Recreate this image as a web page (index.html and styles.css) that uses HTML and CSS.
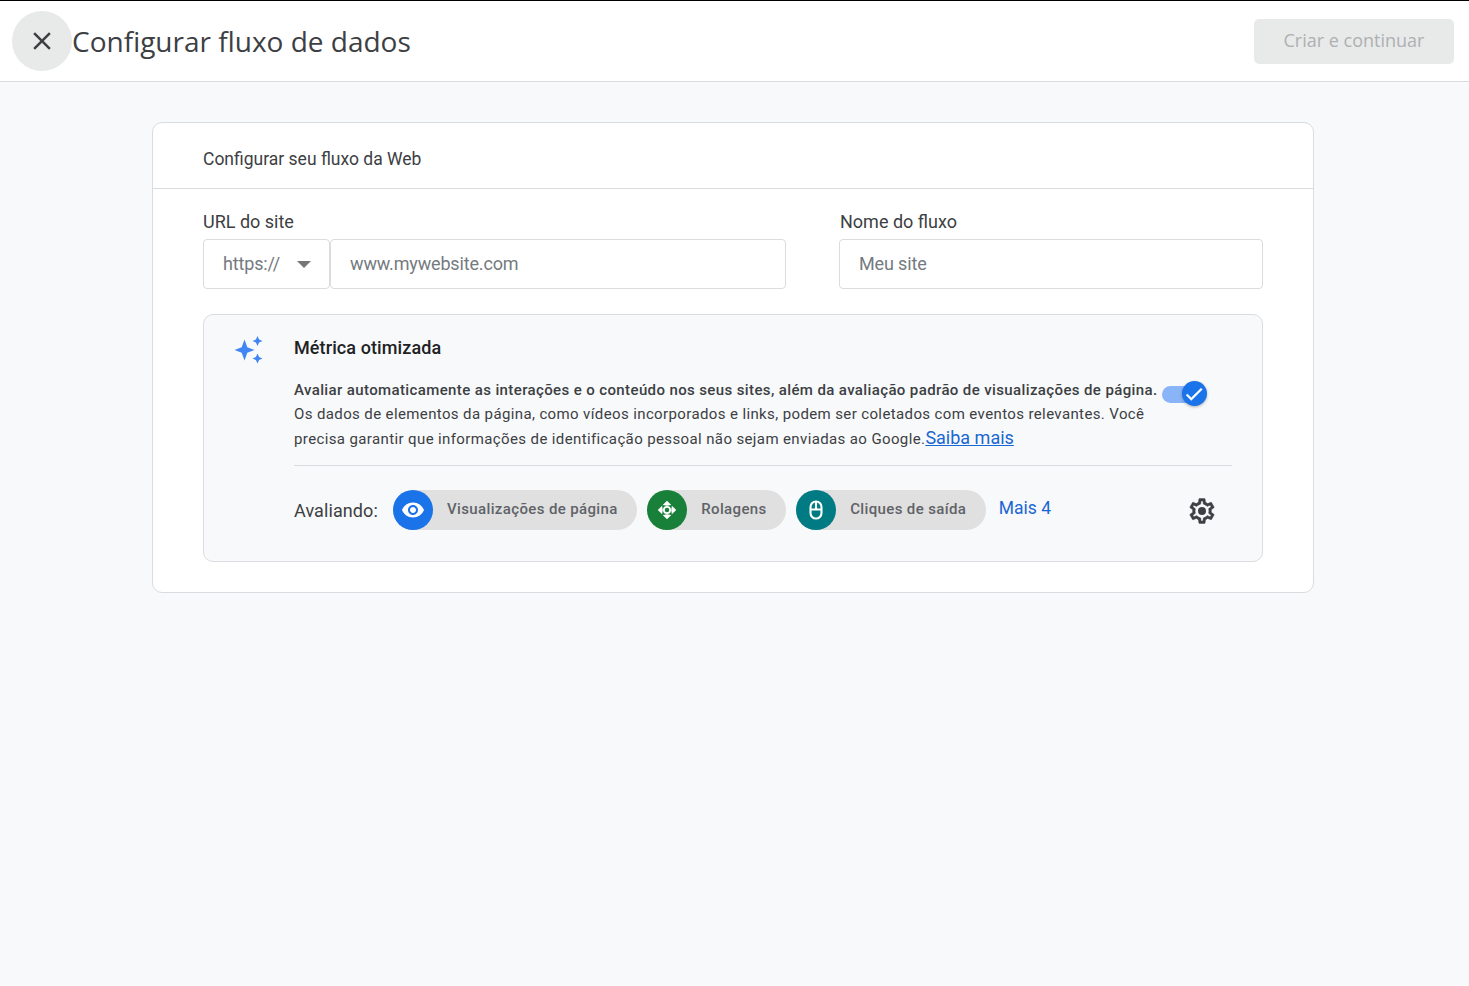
FILE: index.html
```html
<!DOCTYPE html>
<html lang="pt-BR">
<head>
  <meta charset="UTF-8" />
  <meta name="viewport" content="width=device-width, initial-scale=1.0"/>
  <title>Configurar fluxo de dados</title>
  <link rel="stylesheet" href="styles.css">
</head>
<body>

<header class="topbar">
  <div class="topbar-left">
    <button class="close-btn" aria-label="Fechar">
      <svg width="30" height="30" viewBox="0 0 24 24"><path d="M19 6.41 17.59 5 12 10.59 6.41 5 5 6.41 10.59 12 5 17.59 6.41 19 12 13.41 17.59 19 19 17.59 13.41 12z" fill="#3c4043"/></svg>
    </button>
    <h1>Configurar fluxo de dados</h1>
  </div>
  <button class="create-btn" disabled>Criar e continuar</button>
</header>

<main class="content">
  <section class="card">
    <div class="card-title">Configurar seu fluxo da Web</div>
    <div class="card-body">

      <!-- URL and name -->
      <div class="fields">
        <div class="field-url">
          <label>URL do site</label>
          <div class="url-row">
            <div class="box protocol">
              <span>https://</span>
              <span class="caret"></span>
            </div>
            <div class="box url-input">www.mywebsite.com</div>
          </div>
        </div>
        <div class="field-name">
          <label>Nome do fluxo</label>
          <div class="box">Meu site</div>
        </div>
      </div>

      <!-- Enhanced measurement -->
      <div class="metric">
        <div class="metric-icon">
          <svg width="30" height="30" viewBox="0 0 30 30"><path d="M10.500 4.500 13.300 12.200 20.500 15 13.300 17.800 10.500 25.500 7.700 17.800 .5 15 7.700 12.200z M23.500 1 25.100 4.400 28.500 6 25.100 7.600 23.500 11 21.900 7.600 18.500 6 21.900 4.400z M23.500 18.500 25.100 21.900 28.500 23.500 25.100 25.100 23.500 28.500 21.900 25.100 18.500 23.500 21.900 21.900z" fill="#4285f4"/></svg>
        </div>
        <div class="metric-main">
          <h3>Métrica otimizada</h3>
          <div class="metric-desc">
            <div class="metric-text">
              <p class="metric-lead"><strong>Avaliar automaticamente as interações e o conteúdo nos seus sites, além da avaliação padrão de visualizações de página.</strong></p>
              <p>Os dados de elementos da página, como vídeos incorporados e links, podem ser coletados com eventos relevantes. Você</p>
              <p>precisa garantir que informações de identificação pessoal não sejam enviadas ao Google.<a href="#" class="learn">Saiba mais</a></p>
            </div>
            <div class="toggle">
              <span class="toggle-track"></span>
              <span class="toggle-thumb">
                <svg width="22" height="22" viewBox="0 0 24 24"><path d="M9 16.200 4.800 12l-1.400 1.400L9 19 21 7l-1.400-1.400z" fill="#fff" stroke="#fff" stroke-width=".5"/></svg>
              </span>
            </div>
          </div>
          <div class="measuring">
            <span class="measuring-label">Avaliando:</span>
            <div class="chip">
              <span class="chip-icon blue">
                <svg width="24" height="24" viewBox="0 0 24 24"><path d="M12 4.500C7 4.500 2.730 7.610 1 12c1.730 4.390 6 7.500 11 7.500s9.270-3.110 11-7.500c-1.730-4.390-6-7.500-11-7.500zM12 17c-2.760 0-5-2.240-5-5s2.240-5 5-5 5 2.240 5 5-2.240 5-5 5zm0-8c-1.660 0-3 1.340-3 3s1.340 3 3 3 3-1.340 3-3-1.340-3-3-3z" fill="#fff"/></svg>
              </span>
              <span>Visualizações de página</span>
            </div>
            <div class="chip">
              <span class="chip-icon green">
                <svg width="20" height="20" viewBox="0 0 20 20"><path d="M10 .8 14.300 5.100 10 5.800 5.700 5.100z M10 19.200 14.300 14.900 10 14.200 5.700 14.900z M.8 10 5.100 5.700 5.800 10 5.100 14.300z M19.200 10 14.900 5.700 14.200 10 14.900 14.300z" fill="#fff"/><circle cx="10" cy="10" r="3.100" fill="none" stroke="#fff" stroke-width="1.800"/></svg>
              </span>
              <span>Rolagens</span>
            </div>
            <div class="chip">
              <span class="chip-icon teal">
                <svg width="22" height="22" viewBox="0 0 22 22"><rect x="5.500" y="2.500" width="11" height="17" rx="5.500" fill="none" stroke="#fff" stroke-width="2.100"/><path d="M5.500 10.500h11M11 2.500v8" stroke="#fff" stroke-width="2.100" fill="none"/></svg>
              </span>
              <span>Cliques de saída</span>
            </div>
            <a href="#" class="more">Mais 4</a>
            <button class="gear" aria-label="Configurações">
              <svg width="30" height="30" viewBox="0 0 24 24"><path d="M19.430 12.980c.04-.32.070-.64.070-.98s-.03-.66-.07-.98l2.110-1.650c.19-.15.240-.42.120-.64l-2-3.460c-.12-.22-.39-.30-.61-.22l-2.490 1c-.52-.40-1.080-.73-1.690-.98l-.38-2.650C14.460 2.180 14.250 2 14 2h-4c-.25 0-.46.180-.49.420l-.38 2.650c-.61.250-1.170.59-1.690.98l-2.490-1c-.23-.09-.49 0-.61.220l-2 3.460c-.13.220-.07.490.12.640l2.110 1.650c-.04.320-.07.650-.07.980s.03.660.07.980l-2.110 1.650c-.19.150-.24.420-.12.640l2 3.460c.12.220.39.300.61.220l2.490-1c.52.400 1.080.730 1.690.980l.38 2.650c.03.240.24.420.49.420h4c.25 0 .46-.180.49-.420l.38-2.650c.61-.250 1.170-.590 1.690-.980l2.490 1c.23.090.49 0 .61-.220l2-3.460c.12-.220.070-.490-.12-.640l-2.110-1.650zM17.450 11.270c.04.310.05.520.05.730s-.02.430-.05.730l-.14 1.130.89.700 1.080.840-.7 1.210-1.270-.51-1.040-.42-.9.680c-.43.320-.84.560-1.250.730l-1.060.43-.16 1.130-.2 1.350h-1.400l-.19-1.350-.16-1.130-1.060-.43c-.43-.18-.83-.41-1.230-.71l-.91-.700-1.060.43-1.270.51-.7-1.210 1.080-.840.89-.700-.14-1.130c-.03-.31-.05-.54-.05-.74s.02-.43.05-.73l.14-1.130-.89-.700-1.080-.840.7-1.210 1.270.51 1.040.42.9-.68c.43-.32.84-.56 1.250-.73l1.060-.43.16-1.130.2-1.350h1.390l.19 1.350.16 1.130 1.060.43c.43.18.83.41 1.230.71l.91.700 1.060-.43 1.270-.51.7 1.210-1.070.85-.89.700.14 1.130z" fill="#3c4043" stroke="#3c4043" stroke-width=".35"/><circle cx="12" cy="12" r="3.200" fill="#3c4043"/></svg>
            </button>
          </div>
        </div>
      </div>

    </div>
  </section>
</main>

</body>
</html>
```

FILE: styles.css
```css
* {
  box-sizing: border-box;
}

html, body {
  height: 100%;
}

body {
  margin: 0;
  background: #f8f9fa;
  color: #202124;
  font-family: Roboto, sans-serif;
}

.topbar {
  height: 82px;
  background: #fff;
  border-top: 1px solid #000;
  border-bottom: 1px solid #dadce0;
  display: flex;
  justify-content: space-between;
  align-items: center;
  padding: 0 15px 0 12px;
}

.topbar-left {
  display: flex;
  align-items: center;
}

.close-btn {
  width: 60px;
  height: 60px;
  border: none;
  border-radius: 50%;
  background: #e8eaea;
  display: flex;
  align-items: center;
  justify-content: center;
  padding: 0;
}

.topbar h1 {
  margin: 0 0 1px;
  font-family: "Open Sans", sans-serif;
  font-size: 28px;
  font-weight: 400;
  color: #3c4043;
}

.create-btn {
  width: 200px;
  height: 45px;
  border: none;
  border-radius: 5px;
  background: #e8eaea;
  color: #aeb0b2;
  font-family: "Open Sans", sans-serif;
  font-size: 18px;
  padding: 0 0 2px;
}

.content {
  padding: 40px 155px 0 152px;
}

.card {
  background: #fff;
  border: 1px solid #dadce0;
  border-radius: 10px;
  height: 471px;
}

.card-title {
  height: 66px;
  padding: 6px 50px 0;
  display: flex;
  align-items: center;
  border-bottom: 1px solid #dadce0;
  font-size: 17.500px;
  color: #3c4043;
}

.card-body {
  padding: 22px 50px 0;
}

.fields {
  display: flex;
  justify-content: space-between;
}

.fields label {
  display: block;
  font-size: 18px;
  line-height: 22px;
  margin-bottom: 6px;
  color: #3c4043;
}

.field-url {
  width: 583px;
}

.field-name {
  width: 424px;
}

.field-name label {
  padding-left: 1px;
}

.url-row {
  display: flex;
}

.box {
  height: 50px;
  border: 1px solid #dadce0;
  border-radius: 4px;
  background: #fff;
  display: flex;
  align-items: center;
  padding: 0 19px 2px;
  font-size: 18px;
  letter-spacing: -0.150px;
  color: #757a7f;
}

.protocol {
  width: 127px;
  justify-content: space-between;
  padding-right: 18px;
}

.caret {
  border-left: 7px solid transparent;
  border-right: 7px solid transparent;
  border-top: 7px solid #757575;
  margin-top: 2px;
}

.url-input {
  flex: 1;
}

.metric {
  margin-top: 25px;
  height: 248px;
  background: #f8f9fa;
  border: 1px solid #dadce0;
  border-radius: 10px;
  display: flex;
  padding: 20px 30px 0 30px;
}

.metric-icon {
  width: 60px;
  flex: none;
}

.metric-main {
  flex: 1;
}

.metric h3 {
  margin: 0;
  font-size: 18px;
  line-height: 26px;
  font-weight: 500;
  letter-spacing: 0.100px;
}

.metric-desc {
  display: flex;
  align-items: flex-start;
  margin-top: 16px;
  padding-bottom: 14px;
  border-bottom: 1px solid #dadce0;
}

.metric-text p {
  margin: 0;
  font-size: 15px;
  line-height: 24px;
  letter-spacing: 0.380px;
  color: #3c4043;
  white-space: nowrap;
}

.metric-text .metric-lead {
  padding-top: 1px;
}

.metric-text strong {
  font-weight: 500;
}

.learn {
  font-size: 18px;
  letter-spacing: 0;
  color: #1967d2;
}

.toggle {
  position: relative;
  width: 46px;
  height: 26px;
  margin: 4px 0 0 4px;
}

.toggle-track {
  position: absolute;
  left: 0;
  top: 5px;
  width: 34px;
  height: 17px;
  border-radius: 9px;
  background: #8ab4f8;
}

.toggle-thumb {
  position: absolute;
  left: 20px;
  top: 0;
  width: 25px;
  height: 25px;
  border-radius: 50%;
  background: #1a73e8;
  display: flex;
  align-items: center;
  justify-content: center;
  box-shadow: 0 1px 3px rgba(0,0,0,0.3);
}

.measuring {
  display: flex;
  align-items: center;
  margin-top: 24px;
  height: 40px;
}

.measuring-label {
  font-size: 18px;
  letter-spacing: 0.100px;
  color: #3c4043;
  margin-right: 15px;
}

.chip {
  height: 40px;
  border-radius: 20px;
  background: #e0e0e0;
  display: flex;
  align-items: center;
  gap: 14px;
  padding-right: 19.500px;
  margin-right: 10px;
  font-size: 15px;
  font-weight: 500;
  letter-spacing: 0.370px;
  color: #5f6368;
}

.chip span:last-child {
  padding-bottom: 3px;
}

.chip-icon {
  width: 40px;
  height: 40px;
  border-radius: 50%;
  display: flex;
  align-items: center;
  justify-content: center;
}

.chip-icon.blue { background: #1a73e8; }
.chip-icon.green { background: #188038; }
.chip-icon.teal { background: #007b83; }

.more {
  margin-left: 3px;
  font-size: 17.500px;
  color: #1967d2;
  text-decoration: none;
  padding-bottom: 5px;
}

.gear {
  margin-left: auto;
  margin-right: 15px;
  border: none;
  background: none;
  padding: 2px 0 0;
  display: flex;
}
```
